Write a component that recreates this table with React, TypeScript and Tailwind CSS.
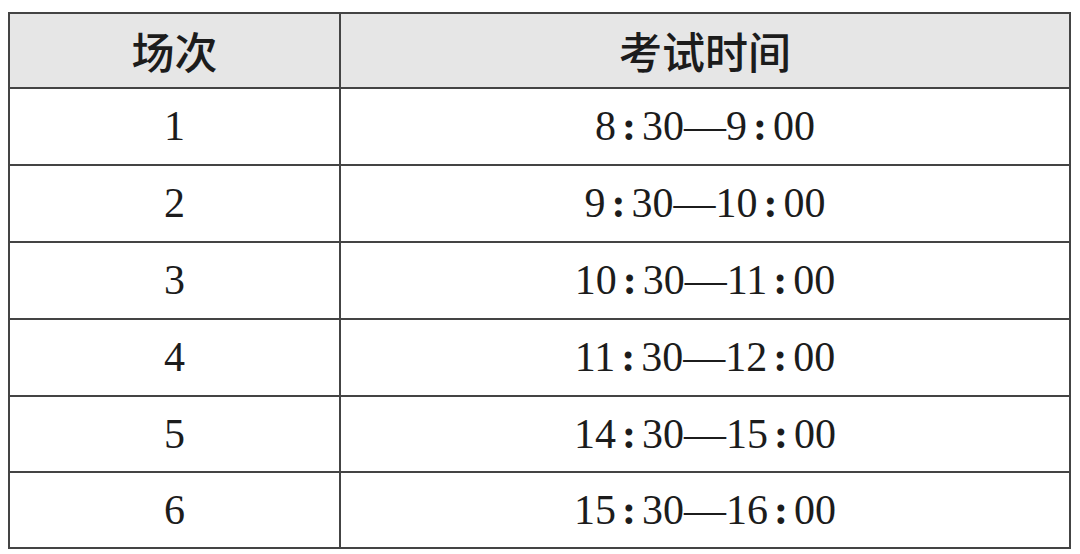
const rows = [
  ["1", "8", "30", "9", "00", "h-[77px]"],
  ["2", "9", "30", "10", "00", "h-[77px]"],
  ["3", "10", "30", "11", "00", "h-[77px]"],
  ["4", "11", "30", "12", "00", "h-[77px]"],
  ["5", "14", "30", "15", "00", "h-[76px]"],
  ["6", "15", "30", "16", "00", "h-[76px]"],
];

function Colon() {
  return <span className="mx-[6px] font-bold">:</span>;
}

export default function App() {
  return (
    <div className="w-[1080px] h-[554px] bg-white pl-[8px] pt-[12px]">
      <table className="w-[1063px] border-collapse text-[#1c1c1c]">
        <thead>
          <tr className="h-[75px] bg-[#e6e6e6]">
            <th className="w-[331px] border-2 border-[#444] p-0 text-center text-[43px] font-medium font-['Noto_Sans_CJK_SC',sans-serif]">
              场次
            </th>
            <th className="border-2 border-[#444] p-0 text-center text-[43px] font-medium font-['Noto_Sans_CJK_SC',sans-serif]">
              考试时间
            </th>
          </tr>
        </thead>
        <tbody className="font-['Liberation_Serif',serif] text-[42px]">
          {rows.map(([n, h1, m1, h2, m2, h]) => (
            <tr key={n} className={h}>
              <td className="border-2 border-[#444] p-0 text-center">{n}</td>
              <td className="border-2 border-[#444] p-0 text-center">
                {h1}
                <Colon />
                {m1}—{h2}
                <Colon />
                {m2}
              </td>
            </tr>
          ))}
        </tbody>
      </table>
    </div>
  );
}
